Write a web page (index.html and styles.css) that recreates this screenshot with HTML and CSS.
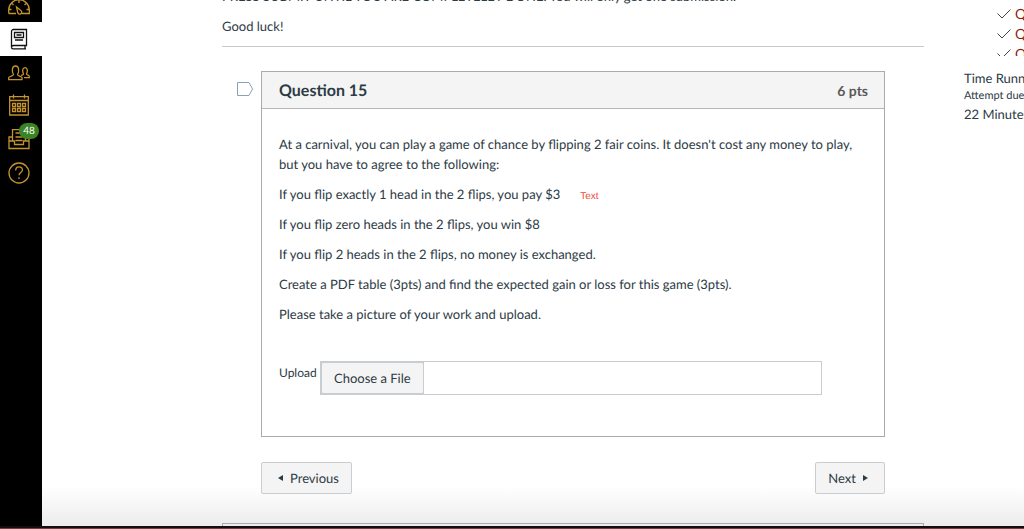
FILE: index.html
```html
<!DOCTYPE html>
<html lang="en">
<head>
<meta charset="utf-8">
<title>Quiz: Question 15</title>
<link rel="stylesheet" href="styles.css">
</head>
<body>
<div class="app">
  <nav class="nav" aria-label="Global">
    <a class="nav-item nav-first" href="#" aria-label="Dashboard">
      <svg class="icon" width="22" height="16" viewBox="0 0 22 16"><path d="M.7 14.500V11a10.300 10.300 0 0 1 20.600 0v3.500H14M.7 14.500H8M11 1v3M4 4.500l1.500 1.500M18 4.500l-1.500 1.500M1 10.500h2.500M18.500 10.500H21M8.500 8l4.300 3.500a2 2 0 1 1-3 2.300z"/></svg>
    </a>
    <a class="nav-item nav-active" href="#" aria-label="Courses">
      <svg class="icon" width="18" height="22" viewBox="0 0 18 22"><path d="M3.500 1.500H16.500V17.500H3.500A2 2 0 0 0 1.500 19V3.500A2 2 0 0 1 3.500 1.500zM1.500 19A1.500 1.500 0 0 0 3 20.800H16M15 17.500v3.300M4.500 4.500H13.500V9.500H4.500zM6.500 7h5M5 12h8"/></svg>
    </a>
    <a class="nav-item" href="#" aria-label="Groups">
      <svg class="icon" width="22" height="16" viewBox="0 0 22 16"><path d="M.7 14.700V12.500C.7 11.500 5.500 11 5.500 9.500 3.500 6 4 1 7.500 1S11.500 6 9.500 9.500c0 1.500 4.500 2 4.500 3v2.200zM13 10.500c1-.5 2.500-.7 2.500-1.500C14 6 14.500 2.700 17 2.700S20 6 18.500 9c0 1 2.800 1 2.800 2.500V12.700H16"/></svg>
    </a>
    <a class="nav-item" href="#" aria-label="Calendar">
      <svg class="icon" width="22" height="22" viewBox="-1 0 22 22"><path d="M.7 2.700H19.300V21H.7zM.7 6.500H19.300M4.500 .500v4M15.500 .500v4M3.500 9.500h3v3h-3zM8.500 9.500h3v3h-3zM13.500 9.500h3v3h-3zM3.500 14.500h3v3h-3zM8.500 14.500h3v3h-3zM13.500 14.500h3v3h-3z"/></svg>
    </a>
    <a class="nav-item" href="#" aria-label="Inbox, 48 unread">
      <svg class="icon" width="22" height="22" viewBox="0 0 22 22"><path d="M4.500 13V1.700H17.500V13M4.500 9H1V20.500H21V9H17.500M1 13H6.500V16.500H15.500V13H21M7.500 5h5M7.500 9h7M7.500 12.500h7"/></svg>
      <span class="badge">48</span>
    </a>
    <a class="nav-item" href="#" aria-label="Help">
      <svg class="icon" width="22" height="22" viewBox="0 0 22 22"><circle cx="11" cy="11" r="10"/><path d="M7.700 8.500C7.700 6 9 4.800 11 4.800s3.400 1.300 3.400 3.200C14.400 10.500 11 10.500 11 13.300M11 15.200v1.700"/></svg>
    </a>
    <button class="nav-item nav-expand" aria-label="Expand navigation">
      <svg class="icon" width="22" height="16" viewBox="0 0 22 16"><path d="M0 8H18M12 2l6 6-6 6M21 .500v15"/></svg>
    </button>
  </nav>

  <main class="main">
    <div class="intro">
      <p>PRESS SUBMIT UNTIL YOU ARE COMPLETELEY DONE. You will only get one submission.</p>
      <p>Good luck!</p>
    </div>
    <div class="question-row">
      <button class="flag" aria-label="Flag question">
        <svg width="18" height="16" viewBox="0 0 18 16"><path d="M1.500 1.500H13L16.500 8 13 14.500H1.500z" fill="none" stroke="#8ba1b5"/></svg>
      </button>
      <section class="question">
        <header class="question-head">
          <h2>Question 15</h2>
          <span class="points">6 pts</span>
        </header>
        <div class="question-body">
          <p>At a carnival, you can play a game of chance by flipping 2 fair coins. It doesn't cost any money to play, but you have to agree to the following:</p>
          <p>If you flip exactly 1 head in the 2 flips, you pay $3<span class="note">Text</span></p>
          <p>If you flip zero heads in the 2 flips, you win $8</p>
          <p>If you flip 2 heads in the 2 flips, no money is exchanged.</p>
          <p>Create a PDF table (3pts) and find the expected gain or loss for this game (3pts).</p>
          <p>Please take a picture of your work and upload.</p>
          <div class="upload">
            <label for="file-name">Upload</label>
            <div class="file-box">
              <button class="btn file-btn">Choose a File</button>
              <input class="file-name" id="file-name" type="text" readonly>
            </div>
          </div>
        </div>
      </section>
    </div>
    <div class="pager">
      <button class="btn"><svg width="5" height="6" viewBox="0 0 5 6"><path d="M5 0v6L0 3z" fill="#2d3b45"/></svg>Previous</button>
      <button class="btn">Next<svg width="5" height="6" viewBox="0 0 5 6"><path d="M0 0v6l5-3z" fill="#2d3b45"/></svg></button>
    </div>
    <div class="submit-box"></div>
  </main>

  <aside class="side">
    <ul class="question-list">
      <li><svg class="check" width="14" height="10" viewBox="0 0 14 10"><path d="M.500 4.500 5 9 13.500 .500"/></svg><a href="#">Question 13</a></li>
      <li><svg class="check" width="14" height="10" viewBox="0 0 14 10"><path d="M.500 4.500 5 9 13.500 .500"/></svg><a href="#">Question 14</a></li>
      <li><svg class="check" width="14" height="10" viewBox="0 0 14 10"><path d="M.500 4.500 5 9 13.500 .500"/></svg><a href="#">Question 15</a></li>
    </ul>
    <div class="timer">Time Running:</div>
    <div class="due">Attempt due:</div>
    <div class="timer">22 Minutes</div>
  </aside>
</div>
<div class="edge"></div>
</body>
</html>
```
FILE: styles.css
```css
* { box-sizing: border-box; }

body {
  margin: 0;
  height: 100vh;
  overflow: hidden;
  display: flex;
  flex-direction: column;
  font-family: Lato, "Liberation Sans", sans-serif;
  font-size: 13px;
  line-height: 20px;
  text-rendering: geometricPrecision;
  color: #2d3b45;
}

p { margin: 0 0 10px; }

.app {
  flex: 1;
  min-height: 0;
  display: grid;
  grid-template-columns: 42px minmax(0, 1fr) 60px;
  overflow: hidden;
  background: linear-gradient(to top, #ececec, #fff 40px);
}

.edge {
  height: 3px;
  background: #6b4038;
  border-top: 2px solid #160c0c;
}

/* Global navigation */
.nav {
  display: flex;
  flex-direction: column;
  min-height: 0;
  background: #000;
}

.nav-item {
  position: relative;
  display: flex;
  flex: none;
  align-items: center;
  height: 34px;
  padding: 0 8px;
  border: 0;
  background: none;
  color: #c4932e;
}

.nav-first { height: 22px; padding-bottom: 8px; }
.nav-active { background: #fff; color: #111; padding-left: 10px; }
.nav-active + .nav-item { height: 32px; padding-top: 2px; }
.nav-expand { margin-top: auto; margin-bottom: 4px; }

.icon {
  fill: none;
  stroke: currentColor;
  stroke-width: 1.3;
}

.badge {
  position: absolute;
  top: 1px;
  left: 19px;
  width: 20px;
  height: 16px;
  border-radius: 8px;
  background: #3a8424;
  color: #fff;
  font-size: 10px;
  line-height: 16px;
  text-align: center;
}

/* Quiz content */
.main { padding-left: 180px; margin-right: -2px; padding-right: 42px; min-width: 0; }

.intro {
  margin-top: -14px;
  border-bottom: 1px solid #c7c8ca;
}

.question-row {
  display: flex;
  align-items: flex-start;
  margin: 24px 39px 0 14px;
}

.flag {
  display: flex;
  width: 25px;
  margin-top: 10px;
  padding: 0;
  border: 0;
  background: none;
}

.question {
  flex: 1;
  min-width: 0;
  border: 1px solid #a9abad;
  background: #fff;
}

.question-head {
  display: flex;
  align-items: center;
  justify-content: space-between;
  height: 37px;
  padding: 1px 16px 0 17px;
  background: #f4f4f4;
  border-bottom: 1px solid #b4b5b7;
}

.question-head h2 { margin: 0; font-size: 16px; font-weight: 700; }
.points { font-size: 14px; font-weight: 700; color: #595959; }
.question-body { padding: 25px 17px 41px; }

.note {
  margin-left: 20px;
  font: 10px/10px "Liberation Sans", sans-serif;
  color: #ef4a3a;
}

.upload {
  display: flex;
  margin: 37px 45px 0 0;
}

.upload label { width: 41px; padding-top: 2px; font-size: 12px; }

.file-box {
  display: flex;
  flex: 1;
  height: 34px;
  border: 1px solid #c7cdd1;
}

.file-name {
  flex: 1;
  min-width: 0;
  border: 0;
  background: #fff;
  font: inherit;
}

.btn {
  display: flex;
  align-items: center;
  gap: 7px;
  height: 32px;
  padding: 0 12px;
  border: 1px solid #c7cdd1;
  border-radius: 2px;
  background: #f4f4f4;
  color: inherit;
  font: inherit;
  text-rendering: inherit;
}

.file-btn { box-shadow: 0 0 0 1px #c7cdd1; }

.pager {
  display: flex;
  justify-content: space-between;
  margin: 25px 39px 29px;
}

.pager .btn:first-child { padding-left: 16px; }
.pager .btn:last-child { padding-right: 16px; }

.submit-box {
  height: 40px;
  border: 1px solid #a9abad;
}

/* Sidebar */
.side { white-space: nowrap; overflow: hidden; line-height: 18px; }

.question-list {
  height: 56px;
  margin: 0 0 13px;
  padding: 4px 0 0 33px;
  list-style: none;
  overflow: hidden;
}

.question-list li {
  display: flex;
  align-items: center;
  gap: 4px;
  height: 20px;
}

.question-list a { color: #8b1a10; font-size: 14px; text-decoration: none; }

.check { flex: none; fill: none; stroke: #444; }
.due { font-size: 11px; }
```
